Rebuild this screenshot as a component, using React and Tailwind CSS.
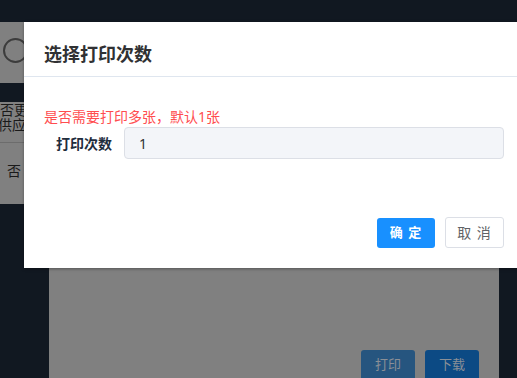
import React from "react";

export default function App() {
  const font = { fontFamily: '"Noto Sans", "Noto Sans CJK SC", sans-serif' };
  return (
    <div
      className="relative w-[517px] h-[378px] overflow-hidden bg-[#111821]"
      style={font}
    >
      {/* background page under overlay */}
      <div className="h-[22px]" />
      <div className="h-[61px] bg-[#808080] pt-[16px] pl-[3px]">
        <div className="w-[25px] h-[25px] rounded-full border-2 border-[#3c3c3c]" />
      </div>
      <div className="h-[19px]" />
      <div className="h-[102px] bg-[#808080] text-[14px] text-[#1a1a1a]">
        <div className="w-[30px] overflow-hidden leading-[15px]">
          <div className="whitespace-nowrap">否更新</div>
          <div className="whitespace-nowrap -ml-[2px]">供应商</div>
        </div>
        <div className="mt-[10px] h-px w-[40px] bg-[#6c6c6c]" />
        <div className="pl-[7px] pt-[21px] leading-[14px]">否</div>
      </div>
      <div className="flex h-[174px]">
        <div className="w-[49px]" />
        <div className="w-[450px] bg-[#808080] flex items-end justify-end pr-[20px] gap-[10px]">
          <div className="w-[54px] h-[30px] -mb-[2px] rounded-[3px] bg-[#26557f] text-[#8a8f96] text-[13px] flex items-center justify-center">
            打印
          </div>
          <div className="w-[54px] h-[30px] -mb-[2px] rounded-[3px] bg-[#0c4a84] text-[#8a8f96] text-[13px] flex items-center justify-center">
            下载
          </div>
        </div>
      </div>

      {/* dialog */}
      <div className="absolute left-[24px] top-[22px] w-[520px] h-[246px] bg-white shadow-[0_1px_3px_rgba(0,0,0,0.35)] flex flex-col">
        <div className="h-[55px] border-b border-[#dfe6ef] pl-[20px] pt-[20px]">
          <div className="text-[18px] leading-[24px] font-bold text-[#303133]">
            选择打印次数
          </div>
        </div>
        <div className="pl-[20px] pr-[40px] pt-[30px]">
          <div className="text-[14px] leading-[20px] text-[#ff4d4f]">
            是否需要打印多张，默认1张
          </div>
          <div className="flex items-center">
            <div className="w-[80px] pr-[12px] text-right text-[14px] font-bold text-[#1f2d3d]">
              打印次数
            </div>
            <div className="w-[380px] h-[32px] rounded-[4px] border border-[#dcdfe6] bg-[#f3f5f9] flex items-center pl-[14px] text-[14px] text-[#303133]">
              1
            </div>
          </div>
          <div className="flex justify-end items-center gap-[10px] mt-[58px]">
            <div className="w-[58px] h-[30px] rounded-[3px] bg-[#1890ff] text-white text-[13px] font-bold flex items-center justify-center tracking-[1px]">
              确 定
            </div>
            <div className="w-[59px] h-[31px] rounded-[3px] border border-[#dcdfe6] bg-white text-[#606266] text-[14px] flex items-center justify-center tracking-[1px]">
              取 消
            </div>
          </div>
        </div>
      </div>
    </div>
  );
}
